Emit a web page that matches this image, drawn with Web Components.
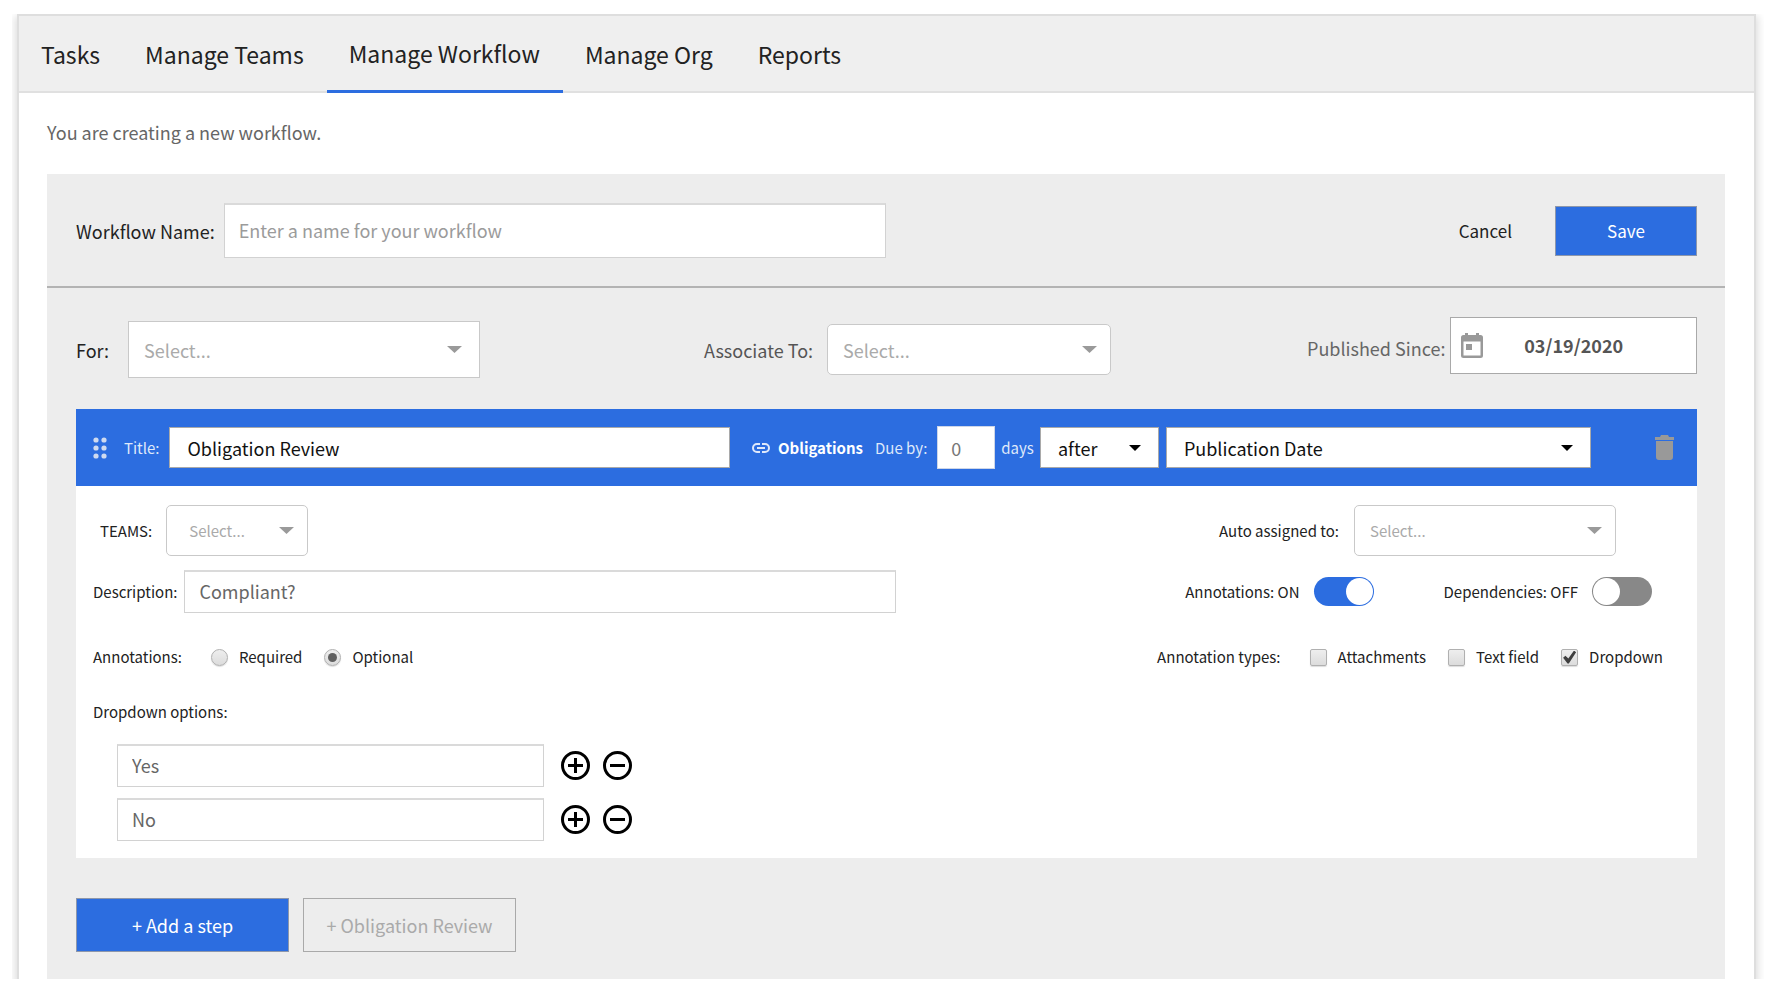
<!DOCTYPE html>
<html lang="en">
<head>
<meta charset="utf-8">
<title>Manage Workflow</title>
<style>
  :root {
    --blue: #2c6de0;
    --panel: #ededed;
    --line: #dcdcdc;
    --muted: #9b9b9b;
  }
  body {
    margin: 0;
    padding: 14px 17px 19px 12px;
    background: #fff;
    color: #222;
    font: 18px/24px "Noto Sans CJK SC", "Noto Sans", sans-serif;
  }
</style>
</head>
<body>
<workflow-app></workflow-app>

<script>
const define = (name, render) => {
  customElements.define(name, class extends HTMLElement {
    connectedCallback() {
      if (this.shadowRoot) return;
      const root = this.attachShadow({ mode: "open" });
      const template = document.createElement("template");
      template.innerHTML = render(this);
      root.append(template.content.cloneNode(true));
    }
  });
};
const attr = (el, name, fallback = "") => el.getAttribute(name) ?? fallback;

const base = `
  *, *::before { box-sizing: border-box; }
  input, select, button { font: inherit; margin: 0; border-radius: 0; }
`;

define("tab-bar", () => `
  <style>
    ${base}
    :host { display: block; background: #efefef; border-bottom: 2px solid #e0e0e0; }
    nav { display: flex; height: 75px; font-size: 23px; line-height: 32px; }
    ::slotted(tab-link) { flex: none; }
  </style>
  <nav><slot></slot></nav>`);

define("tab-link", el => `
  <style>
    ${base}
    :host { display: block; height: 75px; }
    a { display: flex; align-items: center; height: 100%; padding: 0 23px 0 22px; color: inherit; text-decoration: none; }
    a[aria-current] { height: 77px; border-bottom: 3px solid var(--blue); }
  </style>
  <a href="#"${el.hasAttribute("active") ? ' aria-current="page"' : ""}><slot></slot></a>`);

define("text-field", el => `
  <style>
    ${base}
    :host { display: flex; align-items: center; gap: 7px; min-width: 0; }
    label { flex: none; white-space: nowrap; }
    input {
      flex: 1 1 0; width: 100%; min-width: 0; height: var(--field-height, 43px); padding: 0 14px 2px;
      border: 1px solid #d2d2d2; border-top: 2px solid #dadada; background: #fff;
      color: #666; font-size: 18px; outline: 0;
    }
    input::placeholder { color: var(--muted); opacity: 1; }
  </style>
  ${el.hasAttribute("label") ? `<label for="c">${attr(el, "label")}</label>` : ""}
  <input id="c" type="text" aria-label="${attr(el, "label", attr(el, "name"))}"
    value="${attr(el, "value")}" placeholder="${attr(el, "placeholder")}">`);

define("select-field", el => `
  <style>
    ${base}
    :host { display: flex; align-items: center; gap: 15px; min-width: 0; --arrow: #9a9a9a; }
    label { flex: none; white-space: nowrap; }
    .box { display: grid; align-items: center; flex: 1 1 auto; width: var(--select-width, auto); min-width: 0; }
    select, svg { grid-area: 1 / 1; }
    select {
      width: 100%; height: var(--select-height, 51px); padding: 0 15px;
      appearance: none; background: #fff; color: #aaa;
      border: 1px solid #c9c9c9; font-size: var(--select-size, 18px); outline: 0;
    }
    svg { justify-self: end; margin-right: var(--arrow-gap, 14px); pointer-events: none; fill: var(--arrow); }
    :host([rounded]) select { border-radius: 5px; }
    :host([inset]) select { padding-left: 22px; }
    :host([dark]) { --arrow: #000; }
    :host([dark]) select { color: #111; border-color: #a9a9a9; padding: 0 17px; }
    :host([dark]) svg { width: 12px; height: 6px; margin-right: 18px; }
  </style>
  ${el.hasAttribute("label") ? `<label for="c">${attr(el, "label")}</label>` : ""}
  <span class="box">
    <select id="c" aria-label="${attr(el, "label", attr(el, "name"))}"><option>${attr(el, "value", "Select...")}</option></select>
    <svg width="15" height="7" viewBox="0 0 14 7" preserveAspectRatio="none" aria-hidden="true"><path d="M0 0h14L7 7z"/></svg>
  </span>`);

define("date-field", el => `
  <style>
    ${base}
    :host { display: flex; align-items: center; gap: 5px; }
    label { flex: none; white-space: nowrap; }
    .box { display: grid; align-items: center; align-self: flex-start; flex: 1 1 auto; min-width: 0; }
    input, svg { grid-area: 1 / 1; }
    input {
      width: 100%; height: 57px; padding: 0 2px 2px; text-align: center; border: 1px solid #a9a9a9;
      background: #fff; color: #555; font-weight: 700; outline: 0;
    }
    svg { justify-self: start; margin-left: 11px; pointer-events: none; }
  </style>
  <label for="d">${attr(el, "label")}</label>
  <span class="box">
    <input id="d" type="text" value="${attr(el, "value")}">
    <svg width="22" height="25" viewBox="0 0 22 25" fill="#999" aria-hidden="true">
      <path fill-rule="evenodd" d="M4 0h3v2h8V0h3v2h1.500a2.500 2.500 0 0 1 2.500 2.500v18a2.500 2.500 0 0 1-2.500 2.500h-17A2.500 2.500 0 0 1 0 22.500v-18A2.500 2.500 0 0 1 2.500 2H4zM2.500 8.500v14h17v-14z"/>
      <path d="M5 11h6v6H5z"/>
    </svg>
  </span>`);

define("action-button", el => `
  <style>
    ${base}
    :host { display: block; }
    button {
      display: block; width: var(--button-width, auto); height: var(--button-height, 54px);
      padding: 0; border: 1px solid #a9a9a9; background: none; color: #aaa;
      white-space: nowrap; cursor: pointer;
    }
    :host([primary]) button { background: var(--blue); color: #fff; border-color: #8d97ab; }
    :host([plain]) button { border: 0; color: inherit; }
  </style>
  <button type="button"><slot></slot></button>`);

define("toggle-switch", el => `
  <style>
    ${base}
    :host { display: flex; align-items: center; gap: 14px; }
    label { white-space: nowrap; }
    input {
      appearance: none; display: flex; width: 60px; height: 29px; padding: 1px;
      border-radius: 15px; background: #888; cursor: pointer;
    }
    input::before { content: ""; width: 27px; height: 27px; border-radius: 50%; background: #fff; }
    input:checked { background: var(--blue); justify-content: flex-end; }
  </style>
  <label for="t">${attr(el, "label")}</label>
  <input id="t" type="checkbox" role="switch"${el.hasAttribute("checked") ? " checked" : ""}>`);

define("choice-group", el => `
  <style>
    ${base}
    :host { display: block; }
    fieldset { display: flex; align-items: center; margin: 0; padding: 0; border: 0; min-width: 0; }
    .legend { margin-right: 29px; }
    label { display: flex; align-items: center; gap: 11px; white-space: nowrap; }
    label + label { margin-left: 22px; }
    input {
      appearance: none; display: grid; place-items: center; width: 17px; height: 17px;
      border: 1px solid #b0b0b0; background: linear-gradient(#eee, #dcdcdc);
      box-shadow: 0 1px 1px #ddd;
    }
    input[type=radio] { border-radius: 50%; }
    input[type=radio]:checked::before { content: ""; width: 9px; height: 9px; border-radius: 50%; background: #606060; }
    input[type=checkbox] { border-radius: 2px; }
    input[type=checkbox]:checked::before {
      content: ""; width: 13px; height: 13px; background: #3f3f3f;
      clip-path: polygon(0 55%, 18% 40%, 40% 62%, 84% 0, 100% 14%, 44% 100%, 34% 100%);
    }
  </style>
  <fieldset aria-label="${attr(el, "label")}">
    <span class="legend">${attr(el, "label")}</span>
    ${attr(el, "choices").split("|").map(c => `<label><input type="${attr(el, "type")}" name="g"${
      c === attr(el, "selected") ? " checked" : ""}>${c}</label>`).join("")}
  </fieldset>`);

define("option-row", el => `
  <style>
    ${base}
    :host { display: flex; align-items: center; gap: 13px; }
    text-field { flex: 0 1 427px; margin-right: 4px; }
    button { display: block; flex: none; padding: 0; border: 0; background: none; cursor: pointer; }
    svg { display: block; fill: none; stroke: #000; stroke-width: 3; }
  </style>
  <text-field name="Dropdown option" value="${attr(el, "value")}"></text-field>
  <button type="button" aria-label="Add option"><svg width="29" height="29" viewBox="0 0 29 29">
    <circle cx="14.500" cy="14.500" r="13"/><path d="M7 14.500h15M14.500 7v15"/></svg></button>
  <button type="button" aria-label="Remove option"><svg width="29" height="29" viewBox="0 0 29 29">
    <circle cx="14.500" cy="14.500" r="13"/><path d="M7 14.500h15"/></svg></button>`);

define("step-header", () => `
  <style>
    ${base}
    :host {
      display: flex; align-items: center; height: 77px; padding: 0 23px 0 17px;
      background: var(--blue); color: #dfe8fa; font-size: 15px; --select-height: 41px;
    }
    .drag { flex: none; margin-right: 17px; fill: #cfdaf0; }
    label { flex: none; white-space: nowrap; }
    .title-label { margin-right: 9px; }
    .link { display: flex; align-items: center; gap: 8px; margin-right: 12px; color: #fff; font-weight: 700; text-decoration: none; }
    input {
      min-width: 0; border: 1px solid #a9a9a9; background: #fff; font-size: 18px; outline: 0;
    }
    #title { flex: 4 1 560px; height: 41px; padding: 0 18px; margin-right: 22px; color: #111; }
    #due { width: 58px; height: 43px; margin: 0 6px 0 10px; padding: 0 13px; border-color: #cdd6e8; color: #777; }
    .when { flex: none; --select-width: 119px; margin: 0 7px 0 6px; }
    .event { flex: 3 1 424px; margin-right: 64px; }
    button { display: block; padding: 0; border: 0; background: none; cursor: pointer; }
    button svg { display: block; }
  </style>
  <svg class="drag" width="14" height="22" viewBox="0 0 14 22" aria-hidden="true">
    <circle cx="3" cy="3" r="2.600"/><circle cx="11" cy="3" r="2.600"/><circle cx="3" cy="11" r="2.600"/>
    <circle cx="11" cy="11" r="2.600"/><circle cx="3" cy="19" r="2.600"/><circle cx="11" cy="19" r="2.600"/>
  </svg>
  <label class="title-label" for="title">Title:</label>
  <input id="title" type="text" value="Obligation Review">
  <a class="link" href="#">
    <svg width="18" height="10" viewBox="0 0 18 10" fill="none" stroke="#dfe8fa" stroke-width="2" aria-hidden="true">
      <path d="M8 1H5a4 4 0 0 0 0 8h3M10 1h3a4 4 0 0 1 0 8h-3M5 5h8"/></svg>Obligations</a>
  <label for="due">Due by:</label>
  <input id="due" type="text" inputmode="numeric" value="0">
  <label for="due">days</label>
  <select-field class="when" name="When" dark value="after"></select-field>
  <select-field class="event" name="Event" dark value="Publication Date"></select-field>
  <button type="button" aria-label="Delete step">
    <svg width="19" height="25" viewBox="0 0 19 25" fill="#999"><path d="M0 2h5l1-2h7l1 2h5v3H0zM1 6h17v16a3 3 0 0 1-3 3H4a3 3 0 0 1-3-3z"/></svg>
  </button>`);

define("workflow-step", () => `
  <style>
    ${base}
    :host { display: block; background: #fff; font-size: 15px; color: #222; }
    .body { padding: 19px 0 17px 17px; }
    .row { display: flex; align-items: center; justify-content: space-between; }
    .assign { padding: 0 81px 0 7px; --select-size: 15px; }
    .teams { --select-width: 142px; gap: 14px; }
    .assignee { --select-width: 262px; }
    .describe { margin-top: 14px; padding-right: 45px; }
    .describe text-field { flex: 0 1 803px; }
    .toggles { display: flex; gap: 70px; }
    .choices { height: 24px; margin-top: 32px; padding-right: 34px; }
    .heading { margin: 31px 0 20px; font: inherit; }
    .options { display: grid; gap: 11px; padding-left: 24px; }
  </style>
  <step-header></step-header>
  <div class="body">
    <div class="row assign">
      <select-field class="teams" rounded inset label="TEAMS:"></select-field>
      <select-field class="assignee" rounded label="Auto assigned to:"></select-field>
    </div>
    <div class="row describe">
      <text-field label="Description:" value="Compliant?"></text-field>
      <div class="toggles">
        <toggle-switch label="Annotations: ON" checked></toggle-switch>
        <toggle-switch label="Dependencies: OFF"></toggle-switch>
      </div>
    </div>
    <div class="row choices">
      <choice-group type="radio" label="Annotations:" choices="Required|Optional" selected="Optional"></choice-group>
      <choice-group type="checkbox" label="Annotation types:" choices="Attachments|Text field|Dropdown" selected="Dropdown"></choice-group>
    </div>
    <h2 class="heading">Dropdown options:</h2>
    <div class="options">
      <option-row value="Yes"></option-row>
      <option-row value="No"></option-row>
    </div>
  </div>`);

define("workflow-editor", () => `
  <style>
    ${base}
    :host { display: block; background: var(--panel); }
    .name { display: flex; align-items: center; padding: 29px 28px 28px 29px; border-bottom: 2px solid #b3b3b3; }
    .name text-field { flex: 0 1 810px; gap: 9px; margin-right: auto; --field-height: 55px; }
    .cancel { margin-right: 43px; font-size: 17px; }
    .save { font-size: 17px; --button-width: 142px; --button-height: 50px; }
    .filters {
      display: grid; grid-template: 61px / 628fr 603fr 390fr; align-items: end;
      padding: 29px 28px 31px 29px;
    }
    .for { justify-self: start; gap: 19px; --select-width: 352px; --select-height: 57px; --arrow-gap: 18px; }
    .associate { justify-self: start; margin-bottom: 3px; gap: 14px; color: #555; --select-width: 284px; }
    .since { align-self: stretch; color: #666; }
    workflow-step { margin: 0 28px 0 29px; }
    .actions { display: flex; gap: 14px; padding: 40px 29px 27px; --button-width: 213px; }
  </style>
  <div class="name">
    <text-field label="Workflow Name:" placeholder="Enter a name for your workflow"></text-field>
    <action-button class="cancel" plain>Cancel</action-button>
    <action-button class="save" primary>Save</action-button>
  </div>
  <div class="filters">
    <select-field class="for" label="For:"></select-field>
    <select-field class="associate" rounded label="Associate To:"></select-field>
    <date-field class="since" label="Published Since:" value="03/19/2020"></date-field>
  </div>
  <workflow-step></workflow-step>
  <div class="actions">
    <action-button primary>+ Add a step</action-button>
    <action-button>+ Obligation Review</action-button>
  </div>`);

define("workflow-app", () => `
  <style>
    ${base}
    :host { display: block; overflow: hidden; padding: 0 8px 0 5px; }
    main { border: 2px solid #dedede; border-bottom: 0; box-shadow: 0 4px 8px 2px #ddd; background: #fff; }
    .intro { margin: 0; padding: 27px 28px 30px; color: #666; }
    workflow-editor { margin: 0 29px 0 28px; }
  </style>
  <main>
    <tab-bar>
      <tab-link>Tasks</tab-link>
      <tab-link>Manage Teams</tab-link>
      <tab-link active>Manage Workflow</tab-link>
      <tab-link>Manage Org</tab-link>
      <tab-link>Reports</tab-link>
    </tab-bar>
    <p class="intro">You are creating a new workflow.</p>
    <workflow-editor></workflow-editor>
  </main>`);
</script>
</body>
</html>
